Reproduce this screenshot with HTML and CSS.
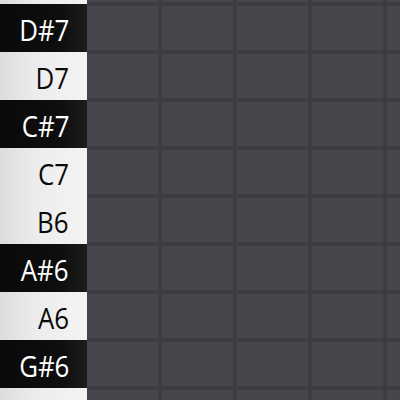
FILE: index.html
```html
<!DOCTYPE html>
<html>
<head>
<meta charset="utf-8">
<link rel="stylesheet" href="styles.css">
</head>
<body>
<div class="roll">
  <div class="keys">
    <div class="key white"></div>
    <div class="key black"><span>D#7</span></div>
    <div class="key white"><span>D7</span></div>
    <div class="key black"><span>C#7</span></div>
    <div class="key white"><span>C7</span></div>
    <div class="key white"><span>B6</span></div>
    <div class="key black"><span>A#6</span></div>
    <div class="key white"><span>A6</span></div>
    <div class="key black"><span>G#6</span></div>
    <div class="key white"></div>
  </div>
  <div class="grid"></div>
</div>
</body>
</html>
```
FILE: styles.css
```css
html, body {
  margin: 0;
  padding: 0;
  width: 400px;
  height: 400px;
  overflow: hidden;
  background: #46474c;
}
.roll {
  display: flex;
  width: 400px;
  height: 400px;
  overflow: hidden;
}
.keys {
  width: 87px;
  flex: none;
  display: flex;
  flex-direction: column;
  margin-top: -44px;
}
.key {
  height: 48px;
  flex: none;
  display: flex;
  align-items: center;
  justify-content: flex-end;
  padding-right: 18px;
  box-sizing: border-box;
  font-family: "Open Sans", sans-serif;
  font-size: 30px;
  line-height: 1;
}
.key span {
  padding-top: 3px;
  transform: scaleX(0.86);
  transform-origin: right center;
}
.white {
  background: linear-gradient(to right, #dcdcdc 0%, #ececec 40%, #f4f4f4 100%);
  color: #0a0a0a;
}
.black {
  background: linear-gradient(to right, #0a0a0a 0%, #0e0e0e 70%, #1c1c1c 100%);
  color: #ffffff;
}
.grid {
  flex: 1;
  background-color: #46474c;
  background-image:
    linear-gradient(to right, transparent 35px, #3b3c41 36.5px, #3b3c41 38.5px, transparent 40px),
    linear-gradient(to bottom, transparent 21.5px, #3b3c41 23px, #3b3c41 25px, transparent 26.5px);
  background-size: 75px 48px, 75px 48px;
  background-position: 35.5px 0, 0 -20px;
}
```
